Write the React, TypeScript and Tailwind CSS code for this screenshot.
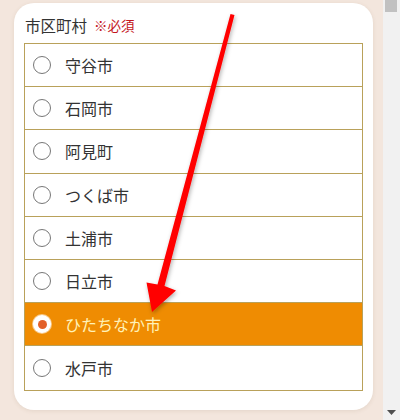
import React from "react";

const cities = ["守谷市", "石岡市", "阿見町", "つくば市", "土浦市", "日立市", "ひたちなか市", "水戸市"];
const selected = "ひたちなか市";

export default function App() {
  return (
    <div
      className="relative w-[400px] h-[420px] flex bg-[#f3e6dd] overflow-hidden"
      style={{ fontFamily: '"Noto Sans CJK JP", "Noto Sans", sans-serif' }}
    >
      <div className="flex-1 pl-[14px] pr-[10px] pt-[3px]">
        <div className="w-[359px] h-[407px] bg-white rounded-[20px] shadow-[0_1px_4px_rgba(120,90,60,0.12)] px-[10px]">
          <div className="h-[40px] pt-[5px] flex items-center pl-[1px]">
            <span className="text-[15.5px] text-[#333]">市区町村</span>
            <span className="ml-[7px] text-[13.5px] text-[#c4161c]">※必須</span>
          </div>
          <div className="border border-[#b9a15a]">
            {cities.map((c, i) => {
              const sel = c === selected;
              return (
                <div
                  key={c}
                  className={
                    "h-[43.2px] flex items-center pl-[8px] " +
                    (i < cities.length - 1 ? "border-b border-[#b9a15a] " : "") +
                    (sel ? "bg-[#ef8c02]" : "bg-white")
                  }
                >
                  {sel ? (
                    <span className="w-[18px] h-[18px] rounded-full bg-white flex items-center justify-center shadow-[0_0_0_1px_#f7c98a]">
                      <span className="w-[9px] h-[9px] rounded-full bg-[#e2602a]" />
                    </span>
                  ) : (
                    <span className="w-[18px] h-[18px] rounded-full bg-white border-[1.5px] border-[#777]" />
                  )}
                  <span
                    className={
                      "ml-[14px] text-[16px] " + (sel ? "text-[#fff2b8]" : "text-[#333]")
                    }
                  >
                    {c}
                  </span>
                </div>
              );
            })}
          </div>
        </div>
      </div>
      <div className="relative w-[17px] h-full bg-[#f1f1f1]">
        <div className="absolute left-[2px] top-0 w-[12px] h-[12px] bg-[#c1c1c1]" />
        <svg className="absolute left-[4px] bottom-[5px]" width="9" height="5" viewBox="0 0 9 5">
          <polygon points="0,0 9,0 4.5,5" fill="#505050" />
        </svg>
      </div>
      <svg
        className="absolute left-0 top-0 pointer-events-none"
        width="400"
        height="420"
        viewBox="0 0 400 420"
      >
        <defs>
          <filter id="sh" x="-20%" y="-20%" width="140%" height="140%">
            <feDropShadow dx="1" dy="2" stdDeviation="2" floodColor="#000" floodOpacity="0.3" />
          </filter>
        </defs>
        <polygon
          points="230.5,14 234.5,15 164.5,286 176,290.5 152,312 146.5,282.5 157.5,284.5"
          fill="#ff0000"
          filter="url(#sh)"
        />
      </svg>
    </div>
  );
}
